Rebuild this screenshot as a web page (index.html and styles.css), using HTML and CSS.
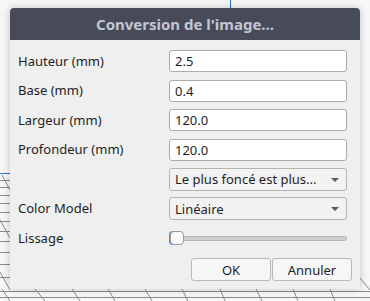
FILE: index.html
```html
<!DOCTYPE html>
<html lang="fr">
<head>
    <meta charset="UTF-8">
    <title>Conversion de l'image...</title>
    <link rel="stylesheet" href="styles.css">
</head>
<body>
    <div id="scene">
        <svg id="plate" width="370" height="301" viewBox="0 0 370 301">
            <line x1="230.5" y1="0" x2="230.5" y2="10" stroke="#2f6fe0" stroke-width="1"/>
            <line x1="0" y1="173.5" x2="12" y2="173.5" stroke="#2f6fe0" stroke-width="1"/>
            <g stroke="#8a8a8a" stroke-width="1" fill="none">
                <line x1="0" y1="180.5" x2="12" y2="180.5"/>
                <line x1="0" y1="187.5" x2="12" y2="187.5"/>
                <line x1="0" y1="195.5" x2="12" y2="195.5"/>
                <line x1="0" y1="203.5" x2="12" y2="203.5"/>
                <line x1="0" y1="212.5" x2="12" y2="212.5"/>
                <line x1="0" y1="221.5" x2="12" y2="221.5"/>
                <line x1="0" y1="231.5" x2="12" y2="231.5"/>
                <line x1="0" y1="241.5" x2="12" y2="241.5"/>
                <line x1="0" y1="252.5" x2="12" y2="252.5"/>
                <line x1="0" y1="264.5" x2="12" y2="264.5"/>
                <line x1="0" y1="277.5" x2="12" y2="277.5"/>
                <line x1="0" y1="291.5" x2="370" y2="291.5"/>
                <line x1="0" y1="297.5" x2="370" y2="297.5"/>
                <line x1="2" y1="175" x2="10" y2="190"/>
                <line x1="0" y1="220" x2="10" y2="238"/>
                <line x1="0" y1="272" x2="10" y2="290"/>
                <line x1="2" y1="289" x2="10" y2="301"/>
                <line x1="35" y1="289" x2="45" y2="301"/>
                <line x1="72" y1="289" x2="80" y2="301"/>
                <line x1="108" y1="289" x2="115" y2="301"/>
                <line x1="145" y1="289" x2="152" y2="301"/>
                <line x1="182" y1="289" x2="188" y2="301"/>
                <line x1="220" y1="289" x2="225" y2="301"/>
                <line x1="256" y1="289" x2="262" y2="301"/>
                <line x1="293" y1="289" x2="298" y2="301"/>
                <line x1="330" y1="289" x2="335" y2="301"/>
                <line x1="360" y1="278" x2="370" y2="290"/>
            </g>
        </svg>
        <div class="dialog">
            <div class="titleBar">Conversion de l'image...</div>
            <div class="content">
                <div class="form">
                    <div class="label">Hauteur (mm)</div>
                    <div class="field">2.5</div>
                    <div class="label">Base (mm)</div>
                    <div class="field">0.4</div>
                    <div class="label">Largeur (mm)</div>
                    <div class="field">120.0</div>
                    <div class="label">Profondeur (mm)</div>
                    <div class="field">120.0</div>
                    <div class="label"></div>
                    <div class="combo">Le plus foncé est plus...<span class="arrow"></span></div>
                    <div class="label">Color Model</div>
                    <div class="combo">Linéaire<span class="arrow"></span></div>
                    <div class="label">Lissage</div>
                    <div class="slider">
                        <div class="groove"></div>
                        <div class="handle"></div>
                    </div>
                </div>
                <div class="actionRow">
                    <div class="button">OK</div>
                    <div class="button">Annuler</div>
                </div>
            </div>
        </div>
    </div>
</body>
</html>
```

FILE: styles.css
```css
* {
    margin: 0;
    padding: 0;
    box-sizing: border-box;
}
body {
    background-color: #f7f7f7;
    font-family: 'Noto Sans', sans-serif;
    color: #1e1e1e;
}
#scene {
    position: relative;
    width: 370px;
    height: 301px;
    overflow: hidden;
    padding: 8px 10px 0 10px;
}
#plate {
    position: absolute;
    top: 0;
    left: 0;
}
.dialog {
    position: relative;
    width: 350px;
    height: 281px;
    background-color: #efefef;
    border-radius: 4px 4px 0 0;
    box-shadow: 0 0 8px rgba(0, 0, 0, 0.22);
    display: flex;
    flex-direction: column;
}
.titleBar {
    height: 32px;
    background-color: #474a59;
    border-radius: 4px 4px 0 0;
    color: #c3c7d2;
    font-weight: bold;
    font-size: 15px;
    display: flex;
    justify-content: center;
    align-items: center;
    padding-bottom: 1px;
}
.content {
    flex: 1;
    padding: 10px 8px 8px 8px;
    display: flex;
    flex-direction: column;
}
.form {
    display: grid;
    grid-template-columns: 151px 178px;
    grid-auto-rows: 22px;
    row-gap: 7.5px;
    align-items: center;
    font-size: 13px;
}
.label {
    padding-bottom: 1px;
}
.field {
    height: 22px;
    background-color: white;
    border: 1px solid #ababab;
    border-radius: 3px;
    padding: 0 5px;
    display: flex;
    align-items: center;
}
.combo {
    position: relative;
    height: 23px;
    background-color: #f2f2f2;
    border: 1px solid #b4b4b4;
    border-radius: 3px;
    padding: 0 5px;
    display: flex;
    align-items: center;
}
.arrow {
    position: absolute;
    right: 7px;
    top: 9px;
    width: 0;
    height: 0;
    border-left: 4px solid transparent;
    border-right: 4px solid transparent;
    border-top: 4px solid #5a5a5a;
}
.slider {
    position: relative;
    height: 22px;
}
.groove {
    position: absolute;
    left: 1px;
    right: 0;
    top: 9px;
    height: 5px;
    background-color: #cfcfcf;
    border: 1px solid #b5b5b5;
    border-radius: 3px;
}
.handle {
    position: absolute;
    left: 1px;
    top: 4px;
    width: 14px;
    height: 14px;
    background-color: #fafafa;
    border: 1px solid #9c9c9c;
    border-radius: 4px;
    box-shadow: -1px 0 0 #3d8ee0;
}
.actionRow {
    margin-top: auto;
    display: flex;
    justify-content: flex-end;
}
.button {
    width: 80px;
    height: 23px;
    background-color: #f6f6f6;
    border: 1px solid #b9b9b9;
    border-radius: 3px;
    font-size: 13px;
    display: flex;
    justify-content: center;
    align-items: center;
}
.button + .button {
    margin-left: 1px;
}
```
